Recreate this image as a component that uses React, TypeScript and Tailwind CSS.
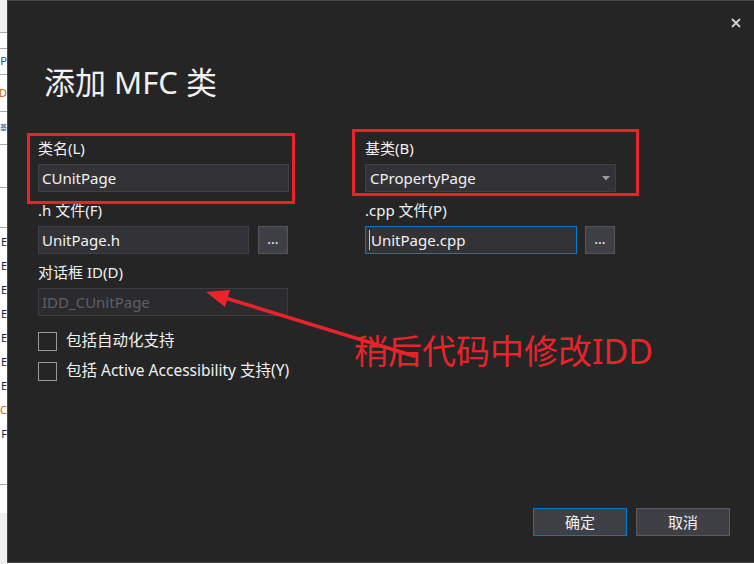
import React from "react";

const font = "font-['Noto_Sans','Noto_Sans_CJK_SC',sans-serif]";

function StripRow({ h, text, color, bg, line }: { h: number; text?: string; color?: string; bg?: string; line?: boolean }) {
  return (
    <div
      className={`flex items-center justify-end overflow-hidden whitespace-nowrap text-[11px] ${line ? "border-b border-[#a8a8a8]" : ""}`}
      style={{ height: h, backgroundColor: bg ?? "#ffffff", color: color ?? "#1b1b1b" }}
    >
      {text && <span className={text === "基" ? "text-[7px]" : ""}>{text}</span>}
    </div>
  );
}

function Field({ label, children }: { label: string; children: React.ReactNode }) {
  return (
    <div className="flex flex-col gap-[6px]">
      <div className="h-5 text-[15px] leading-5 text-[#f1f1f1]">{label}</div>
      {children}
    </div>
  );
}

function TextBox({ value, width, focused, disabled }: { value: string; width: string; focused?: boolean; disabled?: boolean }) {
  return (
    <div
      className={`flex h-7 items-center border pl-[3px] text-[15px] ${width} ${
        focused
          ? "border-[#007acc] bg-[#333337] text-[#f1f1f1]"
          : disabled
          ? "border-[#3c3c40] bg-[#2b2b2e] text-[#5f5f63]"
          : "border-[#3f3f46] bg-[#333337] text-[#f1f1f1]"
      }`}
    >
      {focused && <span className="mr-px h-5 w-px bg-[#c8c8c8]" />}
      {value}
    </div>
  );
}

function Browse() {
  return (
    <div className="flex h-7 w-[30px] items-center justify-center border border-[#55555c] bg-[#3f3f46] pb-1 text-[14px] text-[#f1f1f1]">
      ...
    </div>
  );
}

function Check({ label }: { label: string }) {
  return (
    <div className="flex h-5 items-center gap-[9px]">
      <div className="h-[19px] w-[19px] border border-[#999999]" />
      <span className="text-[15.5px] text-[#f1f1f1]">{label}</span>
    </div>
  );
}

export default function App() {
  return (
    <div className={`relative flex h-[564px] w-[754px] overflow-hidden bg-white ${font}`}>
      {/* background window peeking out on the left */}
      <div className="flex w-[7px] flex-col">
        <StripRow h={33} bg="#f0f0f0" line />
        <StripRow h={16} line />
        <StripRow h={26} text="P" color="#1f4e9c" line />
        <StripRow h={37} text="D" color="#c8641a" line />
        <StripRow h={33} text="基" color="#1f4e9c" line />
        <StripRow h={43} line />
        <StripRow h={40} line />
        <div className="flex h-[218px] flex-col pt-[2px]">
          {["E", "E", "E", "E", "E", "E", "E", "C", "F"].map((t, i) => (
            <StripRow key={i} h={24} text={t} color={t === "C" ? "#c8641a" : "#15224d"} />
          ))}
        </div>
        <StripRow h={39} line />
        <StripRow h={28} />
        <div className="flex-1 bg-[#f0f0f0]" />
      </div>

      {/* dialog */}
      <div className="flex h-[563px] flex-1 flex-col border border-r-0 border-[#46464b] bg-[#252526]">
        <div className="flex h-[44px] items-center justify-end pr-[13px]">
          <svg width="10" height="10" viewBox="0 0 10 10">
            <path d="M1 1 L9 9 M9 1 L1 9" stroke="#d0d0d0" strokeWidth="1.8" />
          </svg>
        </div>
        <h1 className="mt-[17px] pl-[36px] text-[31px] leading-[40px] font-normal text-[#f1f1f1]">添加 MFC 类</h1>

        <div className="mt-[36px] grid grid-cols-[250px_250px] gap-x-[77px] gap-y-[8px] pl-[30px]">
          <Field label="类名(L)">
            <TextBox value="CUnitPage" width="w-[251px]" />
          </Field>
          <Field label="基类(B)">
            <div className="flex h-7 w-[251px] items-center justify-between border border-[#3f3f46] bg-[#333337] pl-[4px] pr-[5px] text-[15px] text-[#f1f1f1]">
              CPropertyPage
              <svg width="8" height="5" viewBox="0 0 8 5">
                <path d="M0 0 H8 L4 4.5 Z" fill="#9a9a9a" />
              </svg>
            </div>
          </Field>
          <Field label=".h 文件(F)">
            <div className="flex gap-[9px]">
              <TextBox value="UnitPage.h" width="w-[211px]" />
              <Browse />
            </div>
          </Field>
          <Field label=".cpp 文件(P)">
            <div className="flex gap-[8px]">
              <TextBox value="UnitPage.cpp" width="w-[212px]" focused />
              <Browse />
            </div>
          </Field>
          <Field label="对话框 ID(D)">
            <TextBox value="IDD_CUnitPage" width="w-[250px]" disabled />
          </Field>
        </div>

        <div className="mt-[15px] flex flex-col gap-[10px] pl-[30px]">
          <Check label="包括自动化支持" />
          <Check label="包括 Active Accessibility 支持(Y)" />
        </div>

        <div className="mt-auto flex justify-end gap-[9px] pb-[26px] pr-[24px]">
          <button className="h-7 w-[94px] border border-[#007acc] bg-[#3f3f46] text-[15px] text-[#f1f1f1]">确定</button>
          <button className="h-7 w-[94px] border border-[#5a5a60] bg-[#3f3f46] text-[15px] text-[#f1f1f1]">取消</button>
        </div>
      </div>

      {/* red annotations drawn over the screenshot */}
      <div className="pointer-events-none absolute left-[27px] top-[133px] h-[71px] w-[268px] border-[3px] border-[#e8232a]" />
      <div className="pointer-events-none absolute left-[352px] top-[129px] h-[67px] w-[287px] border-[3px] border-[#e8232a]" />
      <svg className="pointer-events-none absolute left-0 top-0" width="754" height="564">
        <line x1="414" y1="356" x2="222" y2="297" stroke="#e8232a" strokeWidth="3.5" strokeLinecap="round" />
        <path d="M206 292 L230 290 L225 307 Z" fill="#e8232a" />
      </svg>
      <div className="pointer-events-none absolute left-[354px] top-[330px] whitespace-nowrap text-[34px] leading-[42px] text-[#e8232a]">
        稍后代码中修改IDD
      </div>
    </div>
  );
}
